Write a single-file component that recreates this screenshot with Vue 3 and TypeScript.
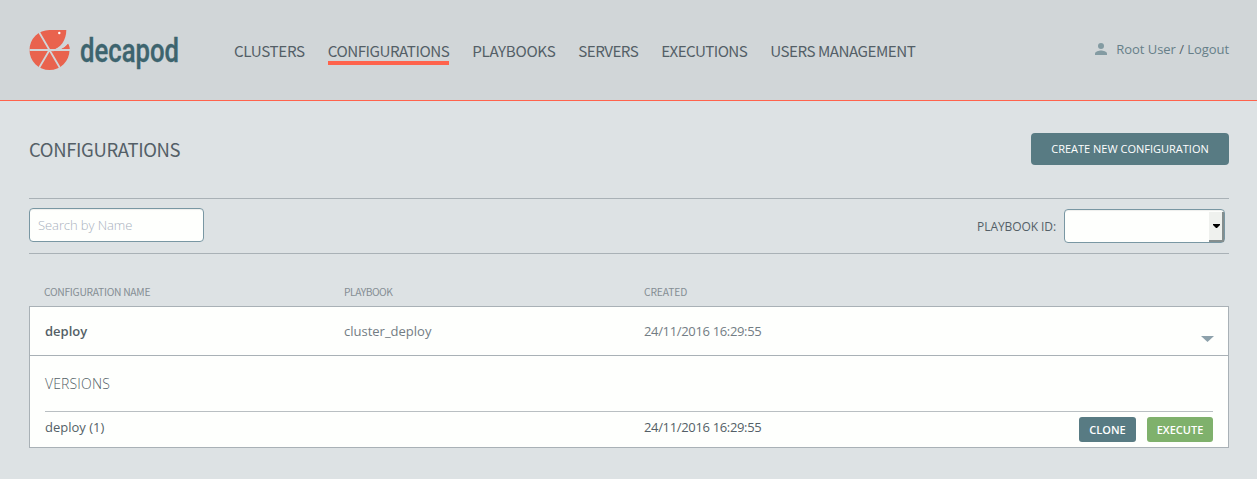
<script setup lang="ts">
import { ref } from 'vue'

const navItems: string[] = ['CLUSTERS', 'CONFIGURATIONS', 'PLAYBOOKS', 'SERVERS', 'EXECUTIONS', 'USERS MANAGEMENT']
const active = ref('CONFIGURATIONS')
const search = ref('')
const config = { name: 'deploy', playbook: 'cluster_deploy', created: '24/11/2016 16:29:55' }
const versions = [{ id: 1, name: 'deploy (1)', created: '24/11/2016 16:29:55' }]
</script>

<template>
  <div class="page">
    <header class="header">
      <svg class="logo" width="160" height="52" viewBox="0 0 160 52">
        <path fill="#e9634e" d="M20.500 2H37.300C37.300 12 32 20 22 23L29 22C34 21 37 19 38.800 16Q40.500 18 40.500 22A20 20 0 1 1 20.500 2Z" />
        <path class="gap" d="M21 22.500C24 24.500 32 22.500 38.800 15.500L36 14C33 18 29 21 21 22.500Z" />
        <path class="tail" d="M32 21.200Q36 19.500 39.200 15.800Q40.600 18 40.600 21.200Z" />
        <path class="cuts" d="M0.500 22H41M20.500 22L10 4M20.500 22L10 40M20.500 22L31 40" />
        <circle cx="30.300" cy="5" r="1.200" fill="#fff" />
        <text x="51" y="33.500" textLength="99" lengthAdjust="spacingAndGlyphs">decapod</text>
      </svg>
      <nav class="nav">
        <a v-for="item in navItems" :key="item" :class="{ active: item === active }" @click="active = item">{{ item }}</a>
      </nav>
      <div class="user">
        <svg width="12" height="12" viewBox="0 0 12 12" fill="#839ba2">
          <circle cx="6" cy="3" r="3" />
          <path d="M0 12V10.500C0 8.500 4 7.500 6 7.500S12 8.500 12 10.500V12Z" />
        </svg>
        <span><a>Root User</a><i> / </i><a>Logout</a></span>
      </div>
    </header>

    <main class="content">
      <div class="title-row">
        <h1>CONFIGURATIONS</h1>
        <button class="create">CREATE NEW CONFIGURATION</button>
      </div>
      <div class="filters">
        <input v-model="search" class="search" placeholder="Search by Name">
        <div class="filter">
          <label>PLAYBOOK ID:</label>
          <div class="select">
            <div class="select-button">
              <svg width="7" height="4" viewBox="0 0 7 4"><path d="M0 0H7V1L4 4H3L0 1Z" /></svg>
            </div>
          </div>
        </div>
      </div>
      <div class="columns head">
        <span>CONFIGURATION NAME</span><span class="playbook">PLAYBOOK</span><span class="created">CREATED</span>
      </div>
      <section class="box">
        <div class="columns config">
          <b>{{ config.name }}</b><span>{{ config.playbook }}</span><span class="date">{{ config.created }}</span>
          <svg class="caret" width="13" height="6" viewBox="0 0 13 6"><path fill="#8da1ab" d="M0 0H13L6.500 6Z" /></svg>
        </div>
        <div class="versions">
          <h2>VERSIONS</h2>
          <div v-for="v in versions" :key="v.id" class="columns version">
            <span>{{ v.name }}</span><span></span><span class="date">{{ v.created }}</span>
            <div class="actions">
              <button class="clone">CLONE</button>
              <button class="execute">EXECUTE</button>
            </div>
          </div>
        </div>
      </section>
    </main>
  </div>
</template>

<style>
body { margin: 0; background: #dde2e4; }
</style>

<style scoped>
* { box-sizing: border-box; }
.page { height: 479px; overflow: hidden; background: #dde2e4; font: 13px/18px "Open Sans", sans-serif; color: #545f67; }
.header { height: 101px; display: flex; align-items: flex-start; background: #d1d6d8; border-bottom: 1px solid #ff634c; padding: 0 28px; }
.logo { margin: 28px 0 0 .5px; flex: none; overflow: visible; }
.logo text { font: 500 34px/40px Roboto, sans-serif; fill: #3d646e; stroke: #3d646e; stroke-width: .4; }
.logo .gap { fill: #d1d6d8; }
.logo .tail { fill: #e9634e; }
.logo .cuts { stroke: #d1d6d8; stroke-width: 1.8; fill: none; }
.nav { display: flex; gap: 23px; margin: 40px 0 0 45.5px; font: 15.200px/21px "Noto Sans CJK SC", sans-serif; white-space: nowrap; letter-spacing: -.5px; }
.nav a { height: 25px; border-bottom: 4px solid transparent; }
.nav a:nth-child(1), .nav a:nth-child(3) { letter-spacing: -.34px; }
.nav a:nth-child(4), .nav a:nth-child(5) { letter-spacing: -.58px; }
.nav .active { border-color: #ff634c; }
.user { display: flex; gap: 9px; margin: 40px 0 0 auto; color: #667f88; letter-spacing: -.05px; }
.user svg { margin-top: 3px; }
.user i { font-style: normal; color: #545f67; }
.content { padding: 0 28px 0 29px; }
.title-row { height: 97px; display: flex; justify-content: space-between; align-items: flex-start; padding-top: 32px; }
h1 { margin: 3px 0 0; font: 18.500px/27px "Noto Sans CJK SC", sans-serif; letter-spacing: -.37px; }
button { border: 0; border-radius: 3px; padding: 0; color: #fff; font-family: "Open Sans", sans-serif; }
.create { width: 198px; height: 32px; background: #587b83; font-size: 11px; border-radius: 4px; padding-bottom: 2px; }
.filters { height: 56px; border: solid #a9b1b6; border-width: 1px 0; display: flex; justify-content: space-between; padding: 9px 4px 0 0; }
.search { width: 175px; height: 34px; border: 1px solid #7997a3; border-radius: 4px; background: #fefffd; padding: 0 8px; font: 300 13px "Open Sans", sans-serif; letter-spacing: -.08px; outline: 0; box-shadow: inset 0 1px 1px #0001; }
.search::placeholder { color: #a9b1bd; opacity: 1; }
.filter { display: flex; gap: 8px; font-size: 12px; letter-spacing: -.08px; line-height: 38px; }
.filter { height: 36px; }
.select { width: 161px; height: 34px; margin-top: 1px; border: 1px solid #7997a3; border-radius: 4px; background: #fefffd; display: flex; justify-content: flex-end; padding-top: 2px; box-shadow: inset 0 1px 1px #0001; }
.select-button { width: 15px; height: 30px; border: solid #858e8e; border-width: 0 2px 2px 0; background: #eff1ee; display: flex; align-items: center; justify-content: center; padding-left: 1px; }
.select-button svg { flex: none; }
.columns { display: grid; grid-template-columns: 300px 300px 1fr auto; }
.head { height: 52px; padding: 29px 15px 0; font: 10.300px/18px "Noto Sans CJK SC", sans-serif; letter-spacing: -.29px; color: #858e94; }
.head .playbook { letter-spacing: -.5px; }
.head .created { letter-spacing: -.15px; }
.box { height: 142px; border: 1px solid #a9b1b6; background: #fefffd; }
.config { height: 49px; border-bottom: 1px solid #a9b1b6; padding: 15px 14px 0; color: #737d84; }
.config b { padding-left: 1px; font-weight: 600; color: #545f67; }
.date { letter-spacing: -.34px; }
.caret { margin-top: 14px; }
.versions { padding: 18px 15px 0; }
h2 { height: 37px; margin: 0; font: 300 14px/20px "Open Sans", sans-serif; letter-spacing: .15px; }
.version { border-top: 1px solid #b9bfc2; padding-top: 6px; grid-template-columns: 299px 300px 1fr auto; }
.actions { display: flex; gap: 11px; margin-top: -1px; }
.actions button { height: 25px; font-size: 11px; font-weight: 600; }
.clone { width: 57px; background: #587b83; }
.actions .execute { width: 66px; background: #7fb16c; }
</style>
